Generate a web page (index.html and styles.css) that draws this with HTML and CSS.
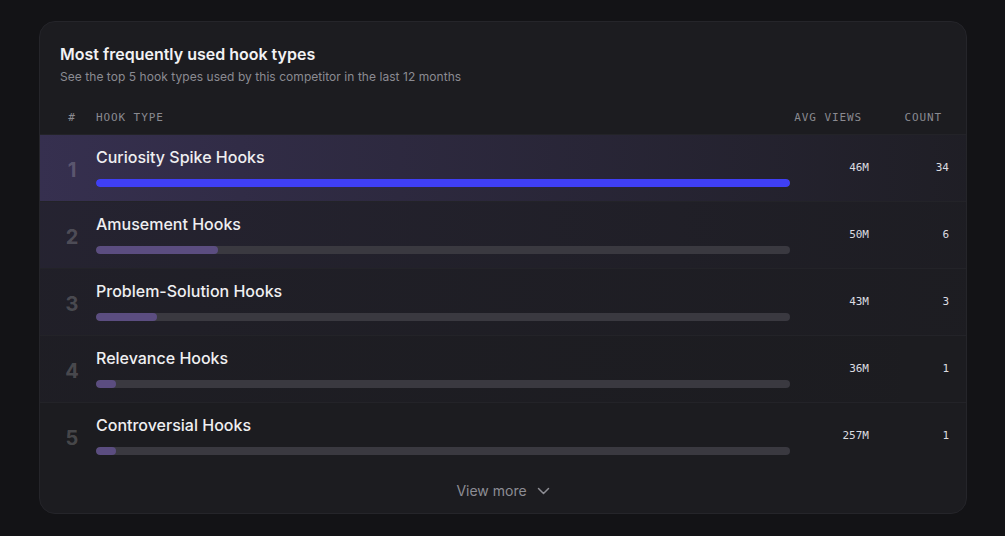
FILE: index.html
```html
<!DOCTYPE html>
<html lang="en">
<head>
<meta charset="utf-8">
<title>Hook types</title>
<link rel="stylesheet" href="styles.css">
</head>
<body>
<section class="card">
  <header class="card-head">
    <h2 class="title">Most frequently used hook types</h2>
    <p class="subtitle">See the top 5 hook types used by this competitor in the last 12 months</p>
  </header>
  <div class="table">
    <div class="thead">
      <span class="c-rank">#</span>
      <span class="c-name">Hook type</span>
      <span class="c-views h-right"><span>Avg views</span></span>
      <span class="c-count h-right"><span>Count</span></span>
    </div>
    <div class="row rank-1">
      <span class="c-rank num">1</span>
      <div class="c-name">
        <div class="name">Curiosity Spike Hooks</div>
        <div class="track"><div class="fill fill-top" style="width:100%"></div></div>
      </div>
      <span class="c-views val">46M</span>
      <span class="c-count val">34</span>
    </div>
    <div class="row rank-2">
      <span class="c-rank num">2</span>
      <div class="c-name">
        <div class="name">Amusement Hooks</div>
        <div class="track"><div class="fill" style="width:17.65%"></div></div>
      </div>
      <span class="c-views val">50M</span>
      <span class="c-count val">6</span>
    </div>
    <div class="row rank-3">
      <span class="c-rank num">3</span>
      <div class="c-name">
        <div class="name">Problem-Solution Hooks</div>
        <div class="track"><div class="fill" style="width:8.82%"></div></div>
      </div>
      <span class="c-views val">43M</span>
      <span class="c-count val">3</span>
    </div>
    <div class="row rank-4">
      <span class="c-rank num">4</span>
      <div class="c-name">
        <div class="name">Relevance Hooks</div>
        <div class="track"><div class="fill" style="width:2.94%"></div></div>
      </div>
      <span class="c-views val">36M</span>
      <span class="c-count val">1</span>
    </div>
    <div class="row rank-5">
      <span class="c-rank num">5</span>
      <div class="c-name">
        <div class="name">Controversial Hooks</div>
        <div class="track"><div class="fill" style="width:2.94%"></div></div>
      </div>
      <span class="c-views val">257M</span>
      <span class="c-count val">1</span>
    </div>
  </div>
  <button class="more" type="button">View more
    <svg width="13" height="8" viewBox="0 0 13 8" fill="none" aria-hidden="true"><path d="M1.5 1.5 L6.5 6.5 L11.5 1.5" stroke="currentColor" stroke-width="1.5" stroke-linecap="round" stroke-linejoin="round"/></svg>
  </button>
</section>
</body>
</html>
```

FILE: styles.css
```css
* { box-sizing: border-box; }
html, body { margin: 0; padding: 0; }
body {
  background: #131316;
  font-family: Inter, "Noto Sans", sans-serif;
  color: #ececee;
  padding: 21px 38px 0 39px;
}
.card {
  width: 928px;
  height: 493px;
  background: #1c1c20;
  border: 1px solid #25252a;
  border-radius: 16px;
  overflow: hidden;
  display: flex;
  flex-direction: column;
}
.card-head {
  padding: 22px 20px 0 20px;
}
.title {
  margin: 0;
  font-size: 16px;
  line-height: 20px;
  font-weight: 600;
  color: #f2f2f4;
}
.subtitle {
  margin: 5px 0 0 0;
  font-size: 12px;
  line-height: 16px;
  letter-spacing: 0.05px;
  color: #8b8b92;
}
.table { margin-top: 15px; }
.thead, .row {
  display: grid;
  grid-template-columns: 24px 1fr 67px 68px;
  column-gap: 12px;
  padding: 0 17px 0 20px;
  align-items: center;
}
.thead {
  height: 34px;
  font-family: "DejaVu Sans Mono", "Liberation Mono", monospace;
  font-size: 11px;
  letter-spacing: 0.9px;
  text-transform: uppercase;
  color: #8a8a90;
  white-space: nowrap;
}
.thead .c-rank { text-align: center; }
.h-right {
  display: flex;
  justify-content: flex-end;
  padding-right: 7px;
  min-width: 0;
}
.h-right > span { flex: none; }
.row {
  height: 67px;
  border-top: 1px solid #232328;
}
.rank-1 { background: linear-gradient(90deg, rgba(104, 86, 170, 0.34), rgba(104, 86, 170, 0.04)); }
.rank-2 { background: linear-gradient(90deg, rgba(104, 86, 170, 0.12), rgba(104, 86, 170, 0.02)); }
.rank-3 { background: linear-gradient(90deg, rgba(104, 86, 170, 0.06), rgba(104, 86, 170, 0.01)); }
.rank-4 { background: linear-gradient(90deg, rgba(104, 86, 170, 0.03), rgba(104, 86, 170, 0)); }
.num {
  text-align: center;
  font-size: 20px;
  font-weight: 700;
  color: rgba(255, 255, 255, 0.2);
  padding-top: 3px;
}
.name {
  font-size: 16px;
  line-height: 22px;
  font-weight: 500;
  color: #efeff1;
  margin-top: -4px;
}
.track {
  margin-top: 11px;
  height: 8px;
  border-radius: 4px;
  background: #3a3940;
  overflow: hidden;
}
.fill {
  height: 100%;
  border-radius: 4px;
  background: #5b4d80;
}
.fill-top { background: #3f3ff5; }
.val {
  text-align: right;
  font-family: "DejaVu Sans Mono", "Liberation Mono", monospace;
  font-size: 11px;
  color: #dcdce0;
  margin-top: -1px;
}
.more {
  flex: 1;
  display: flex;
  align-items: center;
  justify-content: center;
  gap: 10px;
  border: 0;
  background: transparent;
  font-family: Inter, "Noto Sans", sans-serif;
  font-size: 14px;
  color: #8d8d94;
  padding: 0 0 2px 0;
  cursor: pointer;
}
.more svg { margin-top: 1px; }
```
